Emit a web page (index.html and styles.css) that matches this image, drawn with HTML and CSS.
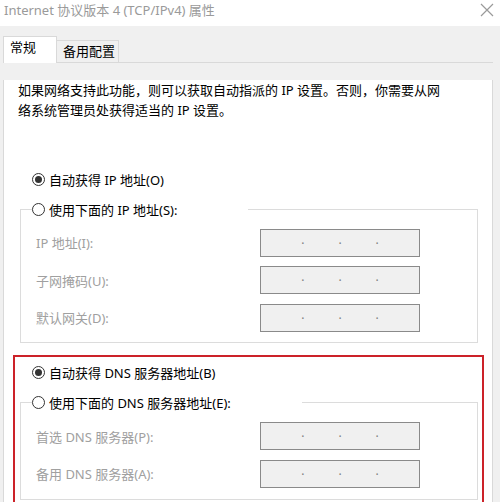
FILE: index.html
```html
<!DOCTYPE html>
<html lang="zh-CN">
<head>
<meta charset="utf-8">
<title>Internet 协议版本 4 (TCP/IPv4) 属性</title>
<link rel="stylesheet" href="styles.css">
</head>
<body>
<div class="titlebar">
  <span class="title">Internet 协议版本 4 (TCP/IPv4) 属性</span>
  <svg class="close" width="14" height="14" viewBox="0 0 14 14"><path d="M1 1L13 13M13 1L1 13" stroke="#9a9a9a" stroke-width="1.2" fill="none"/></svg>
</div>
<div class="tabs">
  <div class="tab active">常规</div>
  <div class="tab">备用配置</div>
</div>
<div class="panel">
  <p class="desc">如果网络支持此功能，则可以获取自动指派的 IP 设置。否则，你需要从网<br>络系统管理员处获得适当的 IP 设置。</p>

  <div class="radio-row first"><span class="radio checked"></span><span>自动获得 IP 地址(O)</span></div>
  <fieldset class="group">
    <legend class="legend-ip"><span class="radio"></span><span>使用下面的 IP 地址(S):</span></legend>
    <div class="fields">
      <span class="label">IP 地址(I):</span>
      <span class="ipbox"><span>.</span><span>.</span><span>.</span></span>
      <span class="label">子网掩码(U):</span>
      <span class="ipbox"><span>.</span><span>.</span><span>.</span></span>
      <span class="label">默认网关(D):</span>
      <span class="ipbox"><span>.</span><span>.</span><span>.</span></span>
    </div>
  </fieldset>

  <div class="highlight">
    <div class="radio-row"><span class="radio checked"></span><span>自动获得 DNS 服务器地址(B)</span></div>
    <fieldset class="group dns">
      <legend class="legend-dns"><span class="radio"></span><span>使用下面的 DNS 服务器地址(E):</span></legend>
      <div class="fields">
        <span class="label">首选 DNS 服务器(P):</span>
        <span class="ipbox"><span>.</span><span>.</span><span>.</span></span>
        <span class="label">备用 DNS 服务器(A):</span>
        <span class="ipbox"><span>.</span><span>.</span><span>.</span></span>
      </div>
    </fieldset>
  </div>
</div>
</body>
</html>
```

FILE: styles.css
```css
html, body {
  margin: 0;
  padding: 0;
  height: 100%;
  overflow: hidden;
}
body {
  background: #f0f0f0;
  font-family: "Noto Sans", "Noto Sans CJK SC", sans-serif;
  font-size: 13px;
  color: #000000;
}
.titlebar {
  height: 26px;
  background: #ffffff;
  display: flex;
  justify-content: space-between;
  align-items: flex-start;
  padding: 1px 6px 0 4px;
  box-sizing: border-box;
}
.title {
  line-height: 18px;
  color: #9a9a9a;
}
.close {
  margin-top: 2px;
}
.tabs {
  margin-left: 3px;
  width: 490px;
  height: 37px;
  box-sizing: border-box;
  border-bottom: 1px solid #d9d9d9;
  display: flex;
  align-items: flex-end;
}
.tab {
  height: 22px;
  width: 62px;
  box-sizing: border-box;
  border-top: 1px solid #d9d9d9;
  border-right: 1px solid #d9d9d9;
  padding-left: 6px;
  line-height: 20px;
}
.tab.active {
  height: 27px;
  width: 54px;
  background: #ffffff;
  border-left: 1px solid #d9d9d9;
  margin-bottom: -1px;
}
.panel {
  margin-left: 3px;
  width: 490px;
  height: 439px;
  box-sizing: border-box;
  background: #ffffff;
  border: 1px solid #d9d9d9;
  border-top: none;
  border-bottom: none;
}
.desc {
  margin: 17px 0 0 14px;
  line-height: 20px;
  white-space: nowrap;
}
.radio-row {
  display: flex;
  align-items: center;
  gap: 4px;
  height: 20px;
  padding-left: 28px;
}
.radio-row.first {
  margin-top: 49px;
}
.radio {
  width: 13px;
  height: 13px;
  box-sizing: border-box;
  border: 1px solid #333333;
  border-radius: 50%;
  background: #ffffff;
  display: inline-flex;
  align-items: center;
  justify-content: center;
  flex: none;
}
.radio.checked::after {
  content: "";
  width: 7px;
  height: 7px;
  border-radius: 50%;
  background: #333333;
}
.group {
  margin: 10px 0 0 16px;
  width: 458px;
  box-sizing: border-box;
  border: 1px solid #dcdcdc;
  padding: 0 0 10px 0;
}
.group legend {
  margin-left: 11px;
  padding: 0;
  height: 20px;
  display: flex;
  align-items: center;
  gap: 4px;
  box-sizing: border-box;
}
.legend-ip {
  width: 216px;
}
.legend-dns {
  width: 270px;
}
.fields {
  display: grid;
  grid-template-columns: 224px 160px;
  row-gap: 9.5px;
  padding: 9.5px 0 0 15px;
  align-items: center;
}
.label {
  color: #a0a0a0;
}
.ipbox {
  height: 28px;
  box-sizing: border-box;
  border: 1px solid #8a8a8a;
  background: #f0f0f0;
  display: flex;
  justify-content: center;
  gap: 34px;
  align-items: center;
  padding-bottom: 6px;
  color: #808080;
  font-size: 12px;
  line-height: 12px;
}
.highlight {
  margin: 12px 0 0 9px;
  width: 471px;
  height: 147px;
  box-sizing: border-box;
  border: 2px solid #cc2229;
  border-bottom: none;
  padding-top: 6px;
}
.highlight .radio-row {
  padding-left: 17px;
}
.group.dns {
  margin-left: 5px;
  padding-bottom: 11px;
}
```
